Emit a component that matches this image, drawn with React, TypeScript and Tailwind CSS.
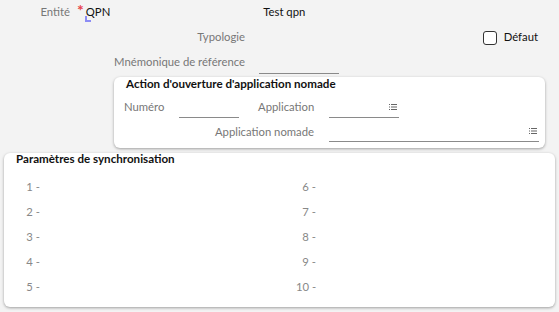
const ListIcon = () => (
  <svg width="8" height="6" viewBox="0 0 8 6" className="text-[#666]">
    <rect x="0" y="0" width="1" height="1" fill="currentColor" />
    <rect x="0" y="2.5" width="1" height="1" fill="currentColor" />
    <rect x="0" y="5" width="1" height="1" fill="currentColor" />
    <rect x="2" y="0" width="6" height="1" fill="currentColor" />
    <rect x="2" y="2.5" width="6" height="1" fill="currentColor" />
    <rect x="2" y="5" width="6" height="1" fill="currentColor" />
  </svg>
);

const Field = ({ width, list }: { width: string; list?: boolean }) => (
  <div className={`${width} h-[22px] border-b border-[#8a8a8a] flex items-center justify-end pr-[2px]`}>
    {list && <ListIcon />}
  </div>
);

export default function App() {
  const left = [1, 2, 3, 4, 5];
  const right = [6, 7, 8, 9, 10];
  return (
    <div className="w-[559px] h-[312px] bg-[#f3f3f3] text-[11.3px] text-[#777] font-['Lato','Liberation_Sans',sans-serif] overflow-hidden">
      <div>
        <div className="h-[24px] flex items-center">
          <span className="w-[70px] text-right">Entité</span>
          <span className="ml-[7px] text-[#e8434a] text-[16px] font-bold leading-none -mt-[5px]">*</span>
          <span className="relative ml-[2px] text-[#111]">
            QPN
            <span className="absolute left-[-1px] top-[12px] w-[6px] h-[6px] border-l-2 border-b-2 border-[#8c8cf5]" />
          </span>
          <span className="ml-[153px] text-[#111]">Test qpn</span>
        </div>
        <div className="h-[25px] pt-[2px] flex items-center">
          <span className="w-[245px] text-right">Typologie</span>
          <div className="ml-auto mr-[21px] flex items-center">
            <span className="w-[14px] h-[14px] border border-[#333] rounded-[3px] bg-white" />
            <span className="ml-[7px] text-[#111]">Défaut</span>
          </div>
        </div>
        <div className="h-[25px] pt-[2px] flex items-center">
          <span className="w-[245px] text-right">Mnémonique de référence</span>
          <div className="ml-[14px] mt-[1px]">
            <Field width="w-[80px]" />
          </div>
        </div>
      </div>

      <div className="ml-[114px] mt-[3px] w-[431px] h-[71px] bg-white rounded-[6px] shadow-[0_1px_3px_rgba(0,0,0,0.35)]">
        <div className="pl-[12px] font-bold text-[#111] text-[11.6px] leading-[14px]">Action d'ouverture d'application nomade</div>
        <div className="flex items-end h-[27px]">
          <span className="ml-[10px] w-[55px] leading-[18px] pb-[2px]">Numéro</span>
          <Field width="w-[60px]" />
          <span className="ml-[19px] w-[71px] leading-[18px] pb-[2px]">Application</span>
          <Field width="w-[70px]" list />
        </div>
        <div className="flex items-end h-[24px]">
          <span className="w-[200px] text-right leading-[18px] pb-[1px]">Application nomade</span>
          <div className="ml-[15px]">
            <Field width="w-[210px]" list />
          </div>
        </div>
      </div>

      <div className="ml-[4px] mt-[5px] w-[551px] h-[154px] bg-white rounded-[6px] shadow-[0_1px_3px_rgba(0,0,0,0.35)]">
        <div className="pl-[12px] font-bold text-[#111] text-[11.6px] leading-[12px]">Paramètres de synchronisation</div>
        <div className="flex mt-[10px] text-[#888]">
          <div className="w-[292px]">
            {left.map((n) => (
              <div key={n} className="h-[25px] flex items-center">
                <span className="w-[36px] text-right whitespace-nowrap">{n} -</span>
              </div>
            ))}
          </div>
          <div>
            {right.map((n) => (
              <div key={n} className="h-[25px] flex items-center">
                <span className="w-[20px] text-right whitespace-nowrap">{n} -</span>
              </div>
            ))}
          </div>
        </div>
      </div>
    </div>
  );
}
